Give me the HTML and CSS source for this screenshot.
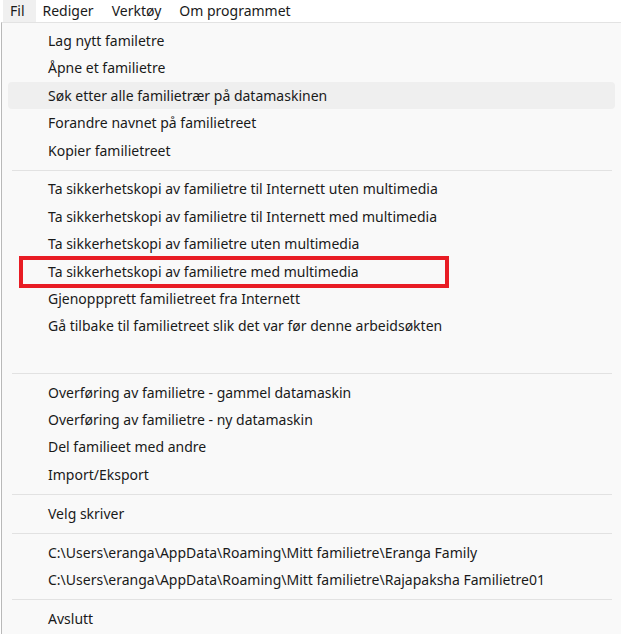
FILE: index.html
```html
<!DOCTYPE html>
<html lang="no">
<head>
<meta charset="utf-8">
<title>Fil-meny</title>
<link rel="stylesheet" href="styles.css">
</head>
<body>
<nav class="menubar">
  <span class="menubar-item is-open">Fil</span>
  <span class="menubar-item">Rediger</span>
  <span class="menubar-item">Verktøy</span>
  <span class="menubar-item">Om programmet</span>
</nav>
<div class="menu">
  <div class="menu-item">Lag nytt familetre</div>
  <div class="menu-item">Åpne et familietre</div>
  <div class="menu-item is-hover">Søk etter alle familietrær på datamaskinen</div>
  <div class="menu-item">Forandre navnet på familietreet</div>
  <div class="menu-item">Kopier familietreet</div>
  <div class="menu-sep"></div>
  <div class="menu-item">Ta sikkerhetskopi av familietre til Internett uten multimedia</div>
  <div class="menu-item">Ta sikkerhetskopi av familietre til Internett med multimedia</div>
  <div class="menu-item">Ta sikkerhetskopi av familietre uten multimedia</div>
  <div class="menu-item is-marked">Ta sikkerhetskopi av familietre med multimedia<span class="mark"></span></div>
  <div class="menu-item">Gjenoppprett familietreet fra Internett</div>
  <div class="menu-item">Gå tilbake til familietreet slik det var før denne arbeidsøkten</div>
  <div class="menu-item"></div>
  <div class="menu-sep"></div>
  <div class="menu-item">Overføring av familietre - gammel datamaskin</div>
  <div class="menu-item">Overføring av familietre - ny datamaskin</div>
  <div class="menu-item">Del familieet med andre</div>
  <div class="menu-item">Import/Eksport</div>
  <div class="menu-sep"></div>
  <div class="menu-item">Velg skriver</div>
  <div class="menu-sep"></div>
  <div class="menu-item">C:\Users\eranga\AppData\Roaming\Mitt familietre\Eranga Family</div>
  <div class="menu-item">C:\Users\eranga\AppData\Roaming\Mitt familietre\Rajapaksha Familietre01</div>
  <div class="menu-sep"></div>
  <div class="menu-item">Avslutt</div>
</div>
</body>
</html>
```
FILE: styles.css
```css
html, body {
  margin: 0;
  padding: 0;
  background: #ffffff;
  overflow: hidden;
}
body {
  font-family: "Noto Sans", "Open Sans", sans-serif;
  font-size: 14px;
  color: #1a1a1a;
}
.menubar {
  display: flex;
  height: 22px;
  padding-left: 3px;
  align-items: stretch;
  background: #ffffff;
}
.menubar-item {
  display: flex;
  align-items: center;
  padding: 0 11px 0 7px;
  line-height: 22px;
}
.menubar-item.is-open {
  background: #f0f0f0;
}
.menu {
  margin-left: 1px;
  border-left: 1px solid #b9b9b9;
  border-top: 1px solid #e3e3e3;
  background: #f9f9f9;
  padding-top: 4px;
  padding-bottom: 2px;
}
.menu-item {
  position: relative;
  height: 27.4px;
  line-height: 27.4px;
  margin: 0 6px;
  padding-left: 40px;
  border-radius: 4px;
  white-space: nowrap;
}
.menu-item.is-hover {
  background: #efefef;
}
.mark {
  position: absolute;
  left: 11px;
  top: -2px;
  width: 422px;
  height: 24px;
  border: 4px solid #e81c24;
}
.menu-sep {
  height: 1px;
  margin: 6px 9px 4.5px 10px;
  background: #e2e2e2;
}
```
